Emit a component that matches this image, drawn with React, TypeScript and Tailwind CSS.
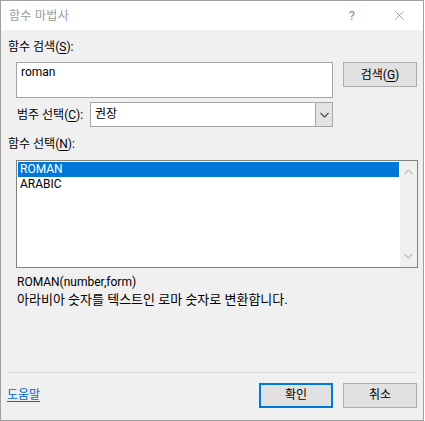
import { X } from "lucide-react";

const font = "font-['Roboto','Noto_Sans_CJK_KR',sans-serif]";

const Mn = ({ ch }: { ch: string }) => (
  <>
    (<span className="underline underline-offset-2">{ch}</span>)
  </>
);

const Chevron = ({ up, className }: { up?: boolean; className?: string }) => (
  <svg width="9" height="6" viewBox="0 0 9 6" className={className}>
    <path
      d={up ? "M0.5 5 L4.5 1 L8.5 5" : "M0.5 1 L4.5 5 L8.5 1"}
      fill="none"
      stroke="currentColor"
      strokeWidth="1.4"
    />
  </svg>
);

const Button = ({ label, primary }: { label: React.ReactNode; primary?: boolean }) => (
  <button
    className={`w-[74px] h-[25px] bg-[#e1e1e1] text-[12px] text-black flex items-center justify-center ${
      primary ? "border-2 border-[#0078d7]" : "border border-[#adadad]"
    }`}
  >
    {label}
  </button>
);

const functions = ["ROMAN", "ARABIC"];

export default function App() {
  return (
    <div className={`w-[424px] h-[421px] border border-[#a0a0a0] flex flex-col bg-[#f0f0f0] ${font}`}>
      {/* title bar */}
      <div className="h-[29px] bg-white flex items-center shrink-0">
        <span className="ml-[8px] text-[12px] text-[#9a9a9a] tracking-wide">함수 마법사</span>
        <span className="ml-auto text-[13px] text-[#8a8a8a] mr-[37px]">?</span>
        <X size={15} strokeWidth={1.2} className="text-[#7a7a7a] mr-[16px]" />
      </div>

      <div className="flex-1 flex flex-col pt-[9px] text-[12px] text-black">
        <div className="h-4 leading-4 pl-[7px]">
          함수 검색<Mn ch="S" />:
        </div>

        <div className="flex items-start mt-[7px] pl-[15px]">
          <div className="w-[317px] h-[36px] bg-white border border-[#a5a5a5] pl-[4px] pt-[1px] leading-4">
            roman
          </div>
          <div className="ml-[10px]">
            <Button label={<>검색<Mn ch="G" /></>} />
          </div>
        </div>

        <div className="flex items-center mt-[4px] pl-[16px]">
          <div className="w-[73px] leading-4">
            범주 선택<Mn ch="C" />:
          </div>
          <div className="w-[243px] h-[25px] bg-white border border-[#a5a5a5] flex">
            <span className="flex-1 pl-[4px] leading-[23px]">권장</span>
            <div className="w-[17px] bg-[#e3e3e3] border-l border-[#a5a5a5] flex items-center justify-center">
              <Chevron className="text-[#5a5a5a]" />
            </div>
          </div>
        </div>

        <div className="h-4 leading-4 pl-[7px] mt-[9px]">
          함수 선택<Mn ch="N" />:
        </div>

        <div className="ml-[15px] mt-[8px] w-[402px] h-[108px] bg-white border border-[#828282] flex">
          <div className="flex-1 p-[1px]">
            {functions.map((f, i) => (
              <div
                key={f}
                className={`h-[15px] leading-[15px] pl-[2px] overflow-hidden ${
                  i === 0 ? "bg-[#0078d7] text-white" : ""
                }`}
              >
                {f}
              </div>
            ))}
          </div>
          <div className="w-[17px] bg-[#f0f0f0] flex flex-col items-center justify-between py-[8px] text-[#c2c2c2]">
            <Chevron up />
            <Chevron />
          </div>
        </div>

        <div className="pl-[16px] mt-[5px] leading-[18px]">
          <div>ROMAN(number,form)</div>
          <div className="text-[13px]">아라비아 숫자를 텍스트인 로마 숫자로 변환합니다.</div>
        </div>

        <div className="mt-auto mx-[7px] h-px bg-[#dadada]" />
        <div className="h-[47px] flex items-center pl-[6px] pr-[6px] pb-[3px]">
          <a className="text-[#0066cc] underline underline-offset-2">도움말</a>
          <div className="ml-auto flex gap-[10px]">
            <Button label="확인" primary />
            <Button label="취소" />
          </div>
        </div>
      </div>
    </div>
  );
}
